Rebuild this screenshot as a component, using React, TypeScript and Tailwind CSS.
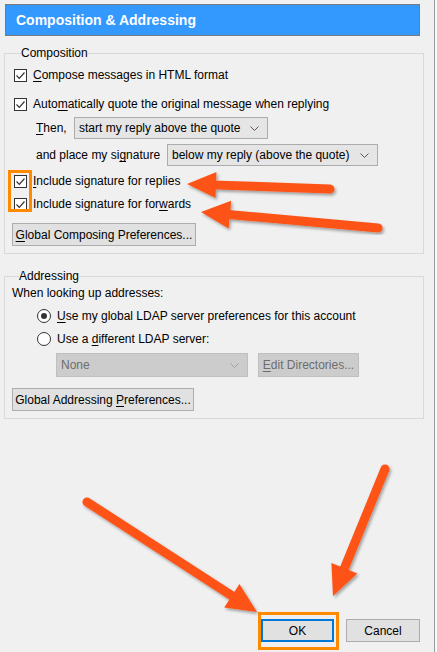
import React from "react"

type Pt = [number, number]

const Arrow = ({ tail, tip, len = 30, half = 14 }: { tail: Pt; tip: Pt; len?: number; half?: number }) => {
  const dx = tip[0] - tail[0]
  const dy = tip[1] - tail[1]
  const d = Math.sqrt(dx * dx + dy * dy)
  const ux = dx / d
  const uy = dy / d
  const bx = tip[0] - ux * len
  const by = tip[1] - uy * len
  const px = -uy * half
  const py = ux * half
  const sx = tip[0] - ux * (len - 4)
  const sy = tip[1] - uy * (len - 4)
  return (
    <g filter="url(#shadow)">
      <line x1={tail[0]} y1={tail[1]} x2={sx} y2={sy} stroke="#fd5318" strokeWidth={9} strokeLinecap="round" />
      <polygon
        points={`${tip[0]},${tip[1]} ${bx + px},${by + py} ${bx - px},${by - py}`}
        fill="#fd5318"
      />
    </g>
  )
}

const U = ({ children }: { children: React.ReactNode }) => <span className="underline underline-offset-2">{children}</span>

const Check = () => (
  <div className="w-[13px] h-[13px] border border-[#333333] bg-white flex items-center justify-center shrink-0">
    <svg width="11" height="11" viewBox="0 0 11 11">
      <polyline points="1.5,5.5 4.3,8.3 9.5,2.5" fill="none" stroke="#333333" strokeWidth="1.2" />
    </svg>
  </div>
)

const Radio = ({ on }: { on?: boolean }) => (
  <div className="w-[14px] h-[14px] rounded-full border border-[#333333] bg-white flex items-center justify-center shrink-0">
    {on && <div className="w-[6px] h-[6px] rounded-full bg-[#333333]" />}
  </div>
)

const Chevron = ({ color = "#555555" }: { color?: string }) => (
  <svg width="9" height="5" viewBox="0 0 9 5">
    <polyline points="0.5,0.5 4.5,4.5 8.5,0.5" fill="none" stroke={color} strokeWidth="1" />
  </svg>
)

const Select = ({ text, w, disabled }: { text: string; w: string; disabled?: boolean }) => (
  <div
    className={`${w} h-full flex items-center justify-between pl-[4px] pr-[8px] border ${
      disabled ? "bg-[#cccccc] border-[#bfbfbf] text-[#6d6d6d]" : "bg-[#e5e5e5] border-[#acacac] text-black"
    }`}
  >
    <span>{text}</span>
    <Chevron color={disabled ? "#a0a0a0" : "#555555"} />
  </div>
)

const Button = ({ children, w, disabled }: { children: React.ReactNode; w: string; disabled?: boolean }) => (
  <div
    className={`${w} h-full flex items-center justify-center border ${
      disabled ? "bg-[#cccccc] border-[#bfbfbf] text-[#6d6d6d]" : "bg-[#e1e1e1] border-[#adadad] text-black"
    }`}
  >
    {children}
  </div>
)

export default function App() {
  return (
    <div
      className="relative w-[437px] h-[652px] bg-[#f7f7f7] overflow-hidden text-[12px] leading-none text-black"
      style={{ fontFamily: '"Liberation Sans", Arial, sans-serif' }}
    >
      <div className="w-[435px] h-full bg-[#f0f0f0] border-r border-[#9a9a9a] flex flex-col">
        <div className="mt-[4px] ml-[5px] w-[415px] h-[32px] border border-[#7a7a7a] bg-[#3399ff] flex items-center pl-[10px]">
          <span className="text-white font-bold text-[14px]">Composition &amp; Addressing</span>
        </div>

        <fieldset className="mt-[9px] ml-[4px] w-[420px] border border-[#d9d9d9] pl-[9px] pb-[7px] flex flex-col">
          <legend className="ml-[7px] h-[16px] leading-[16px]">Composition</legend>
          <div className="mt-[5px] h-[18px] flex items-center gap-[6px]">
            <Check />
            <span>
              <U>C</U>ompose messages in HTML format
            </span>
          </div>
          <div className="mt-[11px] h-[18px] flex items-center gap-[6px]">
            <Check />
            <span>
              Auto<U>m</U>atically quote the original message when replying
            </span>
          </div>
          <div className="mt-[4px] h-[22px] flex items-center pl-[22px]">
            <span className="w-[38px]">
              <U>T</U>hen,
            </span>
            <Select text="start my reply above the quote" w="w-[194px]" />
          </div>
          <div className="mt-[5px] h-[22px] flex items-center pl-[22px]">
            <span className="w-[131px]">
              and place my si<U>g</U>nature
            </span>
            <Select text="below my reply (above the quote)" w="w-[211px]" />
          </div>
          <div className="mt-[6px] h-[18px] flex items-center gap-[6px]">
            <Check />
            <span>
              <U>I</U>nclude signature for replies
            </span>
          </div>
          <div className="mt-[5px] h-[18px] flex items-center gap-[6px]">
            <Check />
            <span>
              Include signature for for<U>w</U>ards
            </span>
          </div>
          <div className="mt-[10px] h-[23px] -ml-[2px] flex">
            <Button w="w-[184px]">
              <span>
                <U>G</U>lobal Composing Preferences...
              </span>
            </Button>
          </div>
        </fieldset>

        <fieldset className="mt-[14px] ml-[4px] w-[420px] border border-[#d9d9d9] pl-[7px] pb-[7px] flex flex-col">
          <legend className="ml-[7px] h-[16px] leading-[16px]">Addressing</legend>
          <div className="h-[18px] flex items-center">When looking up addresses:</div>
          <div className="mt-[5px] h-[18px] flex items-center gap-[6px] pl-[25px]">
            <Radio on />
            <span>
              <U>U</U>se my global LDAP server preferences for this account
            </span>
          </div>
          <div className="mt-[5px] h-[18px] flex items-center gap-[6px] pl-[25px]">
            <Radio />
            <span>
              Use a <U>d</U>ifferent LDAP server:
            </span>
          </div>
          <div className="mt-[5px] h-[24px] flex items-center gap-[10px] pl-[44px]">
            <Select text="None" w="w-[192px]" disabled />
            <Button w="w-[101px]" disabled>
              <span>
                <U>E</U>dit Directories...
              </span>
            </Button>
          </div>
          <div className="mt-[11px] h-[23px] flex">
            <Button w="w-[182px]">
              <span>
                Global Addressing <U>P</U>references...
              </span>
            </Button>
          </div>
        </fieldset>

        <div className="flex-1" />
        <div className="h-[23px] mb-[10px] pr-[14px] flex justify-end gap-[12px]">
          <div className="w-[73px] h-full border-2 border-[#0078d7] bg-[#e1e1e1] flex items-center justify-center">OK</div>
          <Button w="w-[74px]">Cancel</Button>
        </div>
      </div>

      <div className="absolute left-[8px] top-[170px] w-[24px] h-[42px] border-[3px] border-[#ff8a00]" />
      <div className="absolute left-[258px] top-[612px] w-[81px] h-[38px] border-[3px] border-[#ff8a00]" />

      <svg className="absolute inset-0 pointer-events-none" width="437" height="652" viewBox="0 0 437 652">
        <defs>
          <filter id="shadow" x="-20%" y="-20%" width="140%" height="140%">
            <feDropShadow dx="1.5" dy="2" stdDeviation="1.5" floodColor="#000" floodOpacity="0.35" />
          </filter>
        </defs>
        <Arrow tail={[330, 189]} tip={[187, 184]} len={29} half={13} />
        <Arrow tail={[378, 228]} tip={[201, 212]} len={29} half={14} />
        <Arrow tail={[87, 502]} tip={[257, 612]} />
        <Arrow tail={[385, 469]} tip={[333, 596]} />
      </svg>
    </div>
  )
}
